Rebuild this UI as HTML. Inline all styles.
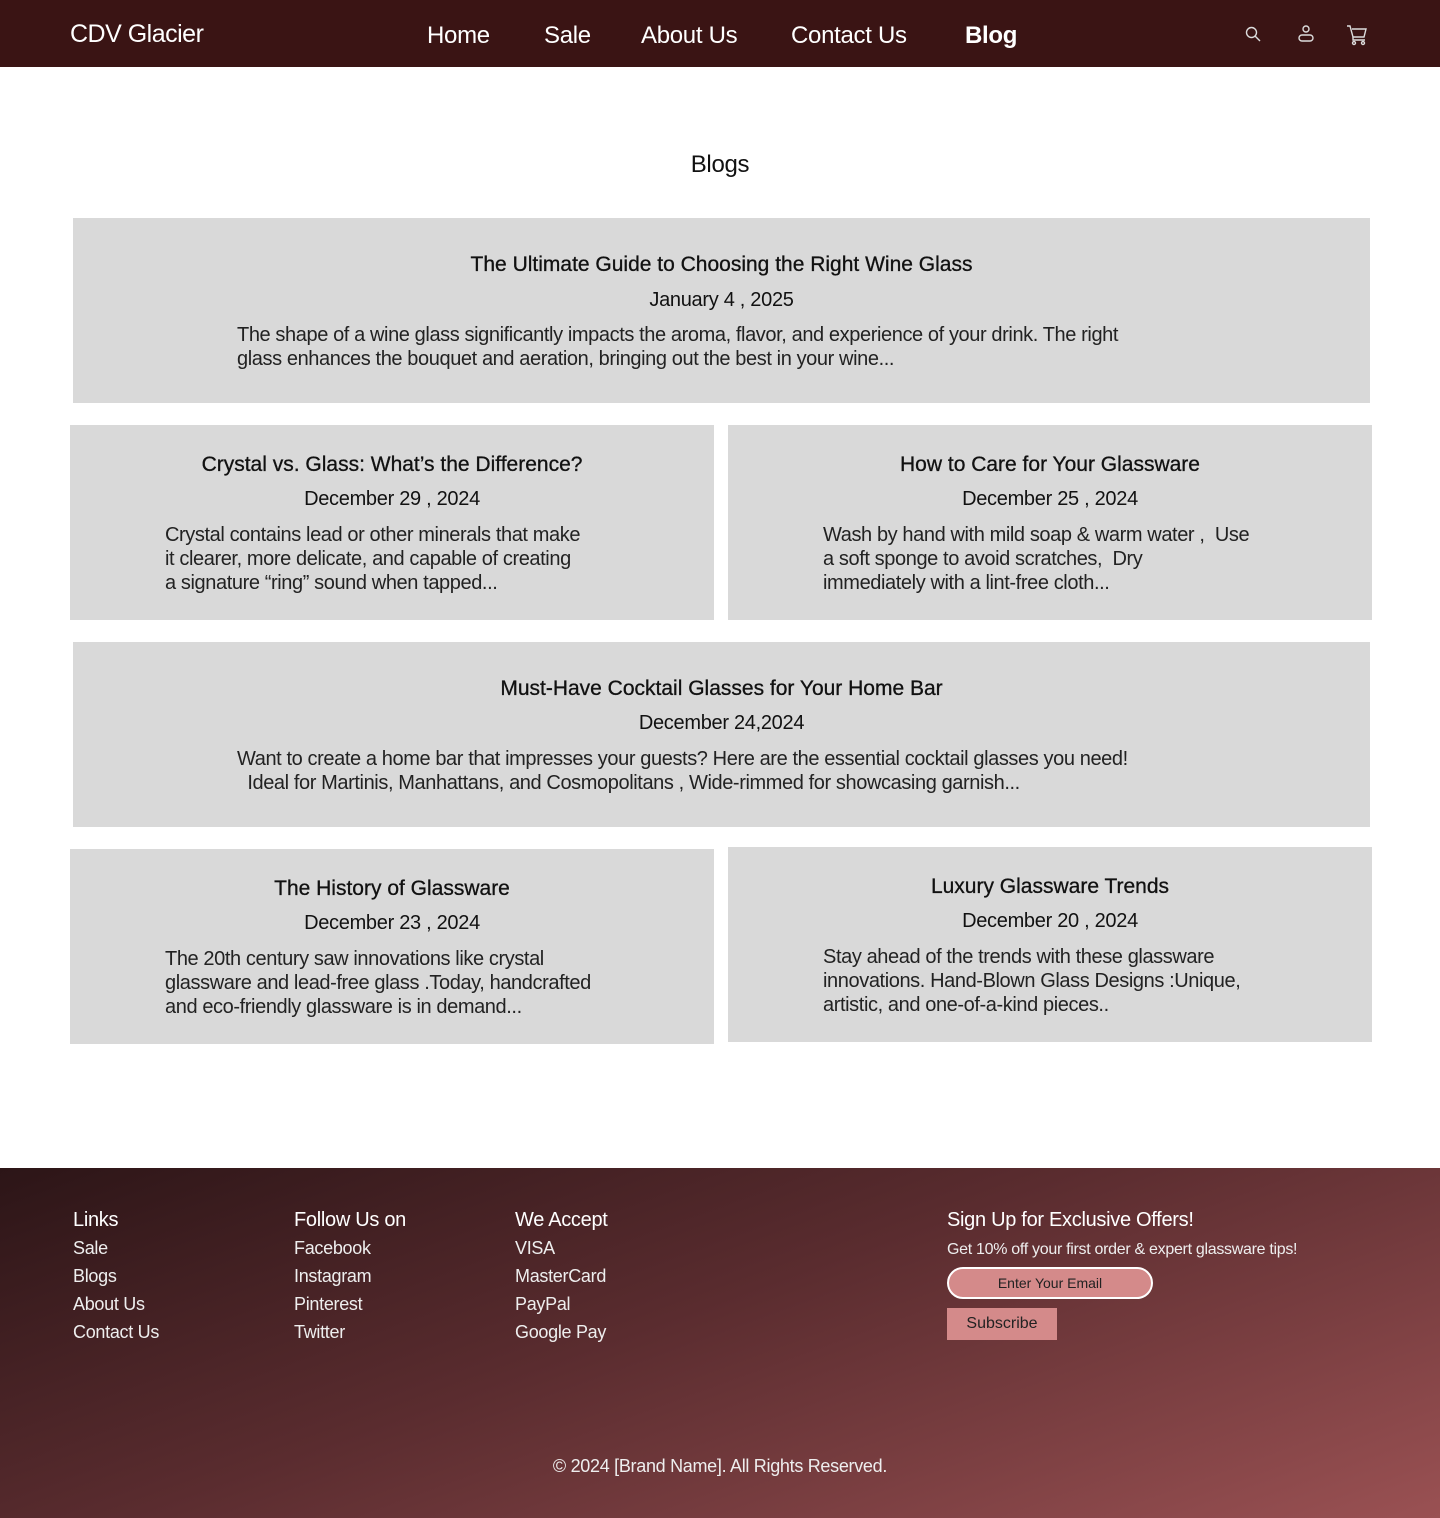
<!DOCTYPE html>
<html><head><meta charset="utf-8"><style>
*{margin:0;padding:0;box-sizing:border-box}
body{width:1440px;height:1518px;position:relative;font-family:"Liberation Sans",sans-serif;background:#fff;color:#111;overflow:hidden}
.hdr{position:absolute;left:0;top:0;width:1440px;height:67px;background:#3a1414;color:#fff}
.hdr .logo{position:absolute;left:70px;top:20px;font-size:25px;letter-spacing:-0.5px}
.hdr .nav a{position:absolute;top:22px;font-size:24px;color:#fff;text-decoration:none;letter-spacing:-0.3px}
.ab{position:absolute}
h1{position:absolute;left:0;width:1440px;top:151px;text-align:center;font-size:24px;font-weight:normal;letter-spacing:-0.3px}
.card{position:absolute;background:#d9d9d9}
.card .t{position:absolute;left:0;right:0;text-align:center;font-size:21px;letter-spacing:0;-webkit-text-stroke:0.3px #111}
.card .d{position:absolute;left:0;right:0;text-align:center;font-size:20px;letter-spacing:-0.3px}
.card .b{position:absolute;font-size:20px;line-height:24px;letter-spacing:-0.4px;color:#222;white-space:nowrap}
.ft{position:absolute;left:0;top:1168px;width:1440px;height:350px;background:linear-gradient(160deg,#2c1517 0%,#5a2c2f 45%,#9a5153 100%);color:#eee}
.ft .h{position:absolute;top:41px;font-size:20px;letter-spacing:-0.3px;color:#fff}
.ft .l{position:absolute;font-size:18px;line-height:28px;letter-spacing:-0.3px}
</style></head><body>
<div class="hdr">
<div class="logo">CDV Glacier</div>
<div class="nav"><a style="left:427px">Home</a><a style="left:544px">Sale</a><a style="left:641px">About Us</a><a style="left:791px">Contact Us</a><a style="left:965px;font-weight:bold">Blog</a></div>
<svg class="ab" style="left:1244px;top:25px" width="20" height="20" viewBox="0 0 20 20" fill="none" stroke="#ddd" stroke-width="1.4"><circle cx="7.5" cy="7.5" r="5"/><path d="M11 11l5 5"/></svg>
<svg class="ab" style="left:1296px;top:24px" width="20" height="20" viewBox="0 0 20 20" fill="none" stroke="#ddd" stroke-width="1.4"><circle cx="10" cy="5" r="3"/><rect x="3" y="11" width="14" height="6" rx="3"/></svg>
<svg class="ab" style="left:1346px;top:24px" width="22" height="22" viewBox="0 0 22 22" fill="none" stroke="#ddd" stroke-width="1.4"><path d="M1 2h3l3 11h11l2-8H6"/><path d="M7 13v3h12"/><circle cx="8" cy="19" r="1.5"/><circle cx="17" cy="19" r="1.5"/></svg>
</div>
<h1>Blogs</h1>

<div class="card" style="left:73px;top:218px;width:1297px;height:185px">
<div class="t" style="top:35px">The Ultimate Guide to Choosing the Right Wine Glass</div>
<div class="d" style="top:71px">January 4 , 2025</div>
<div class="b" style="left:164px;top:105px">The shape of a wine glass significantly impacts the aroma, flavor, and experience of your drink. The right<br>glass enhances the bouquet and aeration, bringing out the best in your wine...</div>
</div>

<div class="card" style="left:70px;top:425px;width:644px;height:195px">
<div class="t" style="top:28px">Crystal vs. Glass: What’s the Difference?</div>
<div class="d" style="top:63px">December 29 , 2024</div>
<div class="b" style="left:95px;top:98px">Crystal contains lead or other minerals that make<br>it clearer, more delicate, and capable of creating<br>a signature “ring” sound when tapped...</div>
</div>
<div class="card" style="left:728px;top:425px;width:644px;height:195px">
<div class="t" style="top:28px">How to Care for Your Glassware</div>
<div class="d" style="top:63px">December 25 , 2024</div>
<div class="b" style="left:95px;top:98px">Wash by hand with mild soap &amp; warm water ,&nbsp; Use<br>a soft sponge to avoid scratches,&nbsp; Dry<br>immediately with a lint-free cloth...</div>
</div>

<div class="card" style="left:73px;top:642px;width:1297px;height:185px">
<div class="t" style="top:35px">Must-Have Cocktail Glasses for Your Home Bar</div>
<div class="d" style="top:70px">December 24,2024</div>
<div class="b" style="left:164px;top:105px">Want to create a home bar that impresses your guests? Here are the essential cocktail glasses you need!<br>&nbsp;&nbsp;Ideal for Martinis, Manhattans, and Cosmopolitans , Wide-rimmed for showcasing garnish...</div>
</div>

<div class="card" style="left:70px;top:849px;width:644px;height:195px">
<div class="t" style="top:28px">The History of Glassware</div>
<div class="d" style="top:63px">December 23 , 2024</div>
<div class="b" style="left:95px;top:98px">The 20th century saw innovations like crystal<br>glassware and lead-free glass .Today, handcrafted<br>and eco-friendly glassware is in demand...</div>
</div>
<div class="card" style="left:728px;top:847px;width:644px;height:195px">
<div class="t" style="top:28px">Luxury Glassware Trends</div>
<div class="d" style="top:63px">December 20 , 2024</div>
<div class="b" style="left:95px;top:98px">Stay ahead of the trends with these glassware<br>innovations. Hand-Blown Glass Designs :Unique,<br>artistic, and one-of-a-kind pieces..</div>
</div>

<div class="ft">
<div class="h" style="left:73px">Links</div>
<div class="l" style="left:73px;top:66px">Sale<br>Blogs<br>About Us<br>Contact Us</div>
<div class="h" style="left:294px">Follow Us on</div>
<div class="l" style="left:294px;top:66px">Facebook<br>Instagram<br>Pinterest<br>Twitter</div>
<div class="h" style="left:515px">We Accept</div>
<div class="l" style="left:515px;top:66px">VISA<br>MasterCard<br>PayPal<br>Google Pay</div>
<div class="h" style="left:947px">Sign Up for Exclusive Offers!</div>
<div class="l" style="left:947px;top:69px;font-size:16px;line-height:26px">Get 10% off your first order &amp; expert glassware tips!</div>
<div class="ab" style="left:947px;top:99px;width:206px;height:32px;border:2px solid #fff;border-radius:16px;background:#d48a8a;color:#222;font-size:14px;text-align:center;line-height:28px">Enter Your Email</div>
<div class="ab" style="left:947px;top:140px;width:110px;height:32px;background:#d48a8a;color:#222;font-size:16px;text-align:center;line-height:32px">Subscribe</div>
<div class="ab" style="left:0;width:1440px;top:288px;text-align:center;font-size:18px;letter-spacing:-0.3px">© 2024 [Brand Name]. All Rights Reserved.</div>
</div>
</body></html>
